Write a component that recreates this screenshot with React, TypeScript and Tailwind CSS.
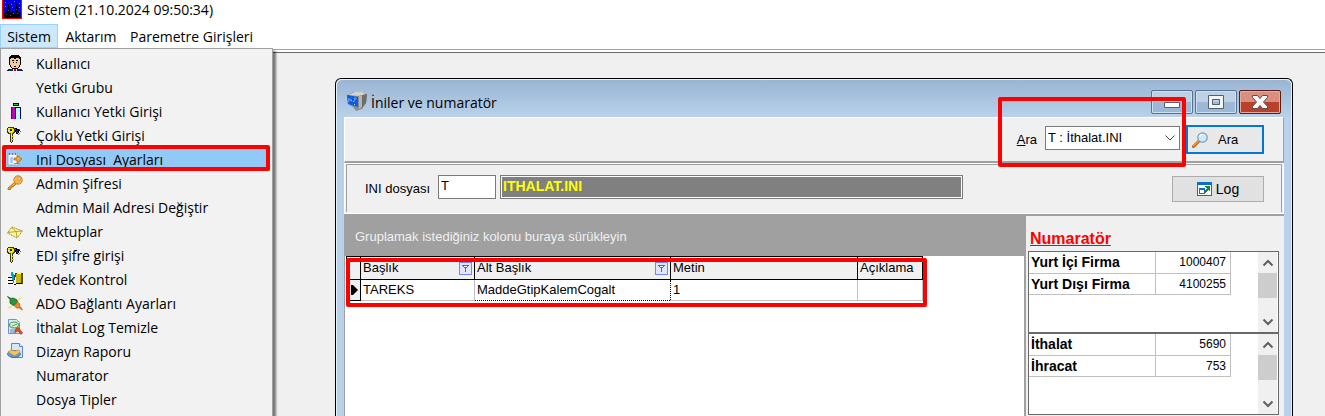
import { ReactNode } from "react";
import clsx from "clsx";

type MenuEntry = {
  label: string;
  icon?: ReactNode;
  active?: boolean;
};

type Counter = {
  name: string;
  value: string;
};

function Icon16({ children }: { children: ReactNode }) {
  return (
    <svg viewBox="0 0 16 16" className="size-4" shapeRendering="crispEdges" aria-hidden="true">
      {children}
    </svg>
  );
}

const userIcon = (
  <Icon16>
    <path d="M3 2h10v9h-1v2h-1v1H5v-1H4v-2H3z" fill="#f6c9a0" />
    <path d="M4 0h8v1h1v1h1v5h-1V4h-1V3H9v1H7V3H4v1H3v3H2V2h1V1h1z" fill="#000" />
    <path d="M2 7h1v3H2zM13 7h1v3h-1zM3 10h1v2H3zM12 10h1v2h-1zM4 12h1v1H4zM11 12h1v1h-1zM5 13h6v1H5zM5 5h2v1H5zM9 5h2v1H9zM6 7h1v1H6zM9 7h1v1H9zM7 11h2v1H7z" fill="#000" />
    <path d="M1 14h5v2H0v-1h1zM10 14h5v1h1v1h-6z" fill="#1c2450" />
    <path d="M6 14h4v1H6z" fill="#fff" />
    <path d="M7 14h2v2H7z" fill="#e00000" />
  </Icon16>
);

const accessIcon = (
  <Icon16>
    <path d="M6 0h6v3H6z" fill="#000" />
    <path d="M7 1h4v1H7z" fill="#00e000" />
    <path d="M4 4h5v12H4z" fill="#c000c0" />
    <path d="M4 4h1v12H4z" fill="#600070" />
    <path d="M9 4h5v12H9z" fill="#a8ffff" />
    <path d="M8 4h1v12H8zM13 4h1v12h-1zM9 4h5v1H9z" fill="#000080" />
    <path d="M10 6h1v2h-1zM11 9h1v2h-1zM10 12h1v3h-1z" fill="#fff" />
  </Icon16>
);

const keysIcon = (
  <Icon16>
    <path d="M1 0h6v1h1v5H7v1H6v8H5v1H4v-1H3V7H1V6H0V1h1z" fill="#3a3800" />
    <path d="M1 1h5v1h1v3H6v1H5v9H4V6H2V5H1z" fill="#f0e800" />
    <path d="M3 2h2v2H3z" fill="#222" />
    <path d="M2 1h1v1H2zM1 3h1v1H1zM4 8h1v1H4z" fill="#fff" />
    <path d="M5 9h2v1H5zM5 12h2v1H5z" fill="#e0d000" />
    <path d="M8 1h2v1h2v1h1v1h-1v2h-1v1H9V5H8z" fill="#000" />
    <path d="M9 3h2v2H9z" fill="#0018d0" />
    <path d="M8 2h1v1H8zM10 5h1v1h-1z" fill="#008070" />
    <path d="M12 2h1v1h-1zM13 4h1v1h-1zM12 6h1v1h-1zM11 7h1v1h-1z" fill="#666" />
  </Icon16>
);

const iniIcon = (
  <svg viewBox="0 0 16 16" className="size-4" aria-hidden="true">
    <path d="M1 3h11v11H1z" fill="#f8fbff" stroke="#8fa8c8" />
    <path d="M2 2h1v2H2zM5 2h1v2H5zM8 2h1v2H8z" fill="#5878a8" />
    <path d="M3 6h3v6H3z" fill="#a8c8ff" />
    <path d="M7 12h5v1H7z" fill="#6a90c8" />
    <path d="M7 7h3V4l5 4-5 4V9H7z" fill="#eca63a" stroke="#a8681a" strokeWidth="0.8" />
  </svg>
);

const goldKeyIcon = (
  <svg viewBox="0 0 16 16" className="size-4" aria-hidden="true">
    <path d="m8 7-7 6v1.500h2.500V13H5v-1.500h1.500l3-3z" fill="#f3a91e" stroke="#a96210" strokeWidth="0.8" />
    <circle cx="11" cy="5" r="4.2" fill="#f8b944" stroke="#b06c14" strokeWidth="0.8" />
    <circle cx="12.200" cy="3.800" r="1.3" fill="#fff6d8" stroke="#a86a1a" strokeWidth="0.6" />
  </svg>
);

const mailIcon = (
  <svg viewBox="0 0 16 16" className="size-4" aria-hidden="true">
    <path d="m5 4 10.500 4-5.500 7-9.500-5z" fill="#fff5a0" stroke="#6c5c00" strokeDasharray="1 1" />
    <path d="m1 9.500 8-1 6-.5M9 8.500l1 5.500M5 4.500l4 4" fill="none" stroke="#b09000" strokeWidth="0.8" />
  </svg>
);

const backupIcon = (
  <Icon16>
    <path d="M0 5h7v9H0z" fill="#fff" />
    <path d="M1 6h4v1H1zM1 9h5v1H1zM1 12h5v1H1zM7 13h2v1H7z" fill="#000" />
    <path d="M9 2h7v11H9z" fill="#c8b800" />
    <path d="M10 1h5v2h-5z" fill="#fff480" />
    <path d="M14 2h2v11h-2z" fill="#5c5400" />
    <path d="M9 12h6v1H9z" fill="#000" />
    <path d="M4 1h2v2h1v3h1v3H7v3H6V9H5V5H4z" fill="#00a8b8" />
    <path d="M8 2h2v1H9v3H8v3H7V4h1z" fill="#0050a0" />
  </Icon16>
);

const plugIcon = (
  <svg viewBox="0 0 16 16" className="size-4" aria-hidden="true">
    <path d="m14 3-4 3M2 13l4-3M1 11.500l2 2M12 13l3 0" stroke="#f4d800" />
    <path d="m.5 1.500 2.500 3V8l2 1.500 2 1 3.500-4-1-2L6 3 4 3.500z" fill="#259b38" stroke="#145c20" strokeWidth="0.8" />
    <path d="m10.500 7 2 1.500.5 3 2.500 3.500-3-2H9.500L7.500 11z" fill="#f58a24" stroke="#b85a10" strokeWidth="0.8" />
  </svg>
);

const logCleanIcon = (
  <svg viewBox="0 0 16 16" className="size-4" aria-hidden="true">
    <path d="M1.500.500h8l3 3v11h-11z" fill="#dbe9fb" stroke="#6f94c8" />
    <path d="M3 11h6M3 13h6" stroke="#5b84c4" />
    <path d="m9 9 2.500-.5 4 5.500-1.500 1.500-3-3.500-3 1.500z" fill="#e04e28" stroke="#a02c12" strokeWidth="0.6" />
    <ellipse cx="7" cy="6" rx="4.500" ry="3" fill="#d6f0d0" stroke="#45a050" strokeWidth="1.200" />
    <path d="m5 7 5-2" stroke="#55a860" />
  </svg>
);

const reportIcon = (
  <svg viewBox="0 0 16 16" className="size-4" aria-hidden="true">
    <path d="M4.500.500h8l3 3v11h-11z" fill="#d6e6fc" stroke="#5f86c4" />
    <path d="M12.500.500v3h3" fill="#fff" stroke="#5f86c4" />
    <ellipse cx="7" cy="11" rx="6.500" ry="3.500" fill="#5b9be8" stroke="#2f66b8" strokeWidth="0.8" />
    <path d="m1 9 3-2 4 1 4-1 1 2-5 4z" fill="#f9c552" stroke="#c08a1c" strokeWidth="0.6" />
  </svg>
);

const menuEntries: MenuEntry[] = [
  { label: "Kullanıcı", icon: userIcon },
  { label: "Yetki Grubu" },
  { label: "Kullanıcı Yetki Girişi", icon: accessIcon },
  { label: "Çoklu Yetki Girişi", icon: keysIcon },
  { label: "Ini Dosyası  Ayarları", icon: iniIcon, active: true },
  { label: "Admin Şifresi", icon: goldKeyIcon },
  { label: "Admin Mail Adresi Değiştir" },
  { label: "Mektuplar", icon: mailIcon },
  { label: "EDI şifre girişi", icon: keysIcon },
  { label: "Yedek Kontrol", icon: backupIcon },
  { label: "ADO Bağlantı Ayarları", icon: plugIcon },
  { label: "İthalat Log Temizle", icon: logCleanIcon },
  { label: "Dizayn Raporu", icon: reportIcon },
  { label: "Numarator" },
  { label: "Dosya Tipler" },
];

const firmCounters: Counter[] = [
  { name: "Yurt İçi Firma", value: "1000407" },
  { name: "Yurt Dışı Firma", value: "4100255" },
];

const fileCounters: Counter[] = [
  { name: "İthalat", value: "5690" },
  { name: "İhracat", value: "753" },
];

function AppLogo() {
  return (
    <svg viewBox="0 0 20 19" className="h-[19px] w-5" shapeRendering="crispEdges" aria-hidden="true">
      <path d="M0 0h20v19H0z" fill="#f00" />
      <path d="M1 0h18v18H1z" fill="#0000e0" />
      <path d="M2 13h2v-2h1V8h1V4h1v4h1v4h2v-1h2v2h1V7h1V4h1v3h1v5h2v6H2z" fill="#000" />
      <path d="M3 2h1v1H3zM9 4h1v1H9zM12 1h1v1h-1zM17 3h1v1h-1zM10 7h1v1h-1zM3 6h1v1H3zM17 7h1v1h-1z" fill="#6080ff" />
      <path d="M6 10h1v1H6zM14 9h1v1h-1zM11 13h1v1h-1zM4 14h1v1H4zM15 13h1v1h-1zM8 15h1v1H8z" fill="#555" />
    </svg>
  );
}

function SystemMenu() {
  return (
    <ul role="menu" className="absolute top-full left-0 z-20 h-screen w-[273px] border border-[#a0a0a0] bg-[#f2f2f2] pt-0.5 shadow-[3px_3px_2px_rgba(0,0,0,0.5)]">
      {menuEntries.map((entry) => (
        <li key={entry.label} role="none" className="relative px-0.5">
          <button
            type="button"
            role="menuitem"
            className={clsx("flex h-6 w-full items-center pl-1 text-left whitespace-pre", entry.active && "bg-[#91c9f7]")}
          >
            <span className="w-[29px] shrink-0">{entry.icon}</span>
            <span className="pt-0.5">{entry.label}</span>
          </button>
          {entry.active && <span className="pointer-events-none absolute -top-0.5 right-0.5 bottom-0 left-px rounded-xs border-4 border-[#fe0000]" />}
        </li>
      ))}
    </ul>
  );
}

function WindowButtons() {
  const base = "flex h-6 w-[42px] items-center justify-center rounded-xs border";
  return (
    <div className="flex gap-0.5">
      <button type="button" aria-label="Simge durumuna küçült" className={clsx(base, "border-[#56728f] bg-linear-to-b from-[#bdd0e5] from-50% to-[#9db8d4] to-50% inset-ring inset-ring-[#cfe0f0]")}>
        <svg viewBox="0 0 18 18" className="size-[18px]" aria-hidden="true">
          <path d="M1.500 9.500h15v5h-15z" fill="#fff" stroke="#53606f" />
        </svg>
      </button>
      <button type="button" aria-label="Ekranı kapla" className={clsx(base, "border-[#56728f] bg-linear-to-b from-[#bdd0e5] from-50% to-[#9db8d4] to-50% inset-ring inset-ring-[#cfe0f0]")}>
        <svg viewBox="0 0 18 18" className="size-[18px]" aria-hidden="true">
          <path d="M1.500 2.500h15v13h-15zM5.500 6.500h7v5h-7z" fill="#f4f4f4" fillRule="evenodd" stroke="#53606f" />
        </svg>
      </button>
      <button type="button" aria-label="Kapat" className={clsx(base, "border-[#5a1c18] bg-linear-to-b from-[#d98f80] from-50% to-[#b9412b] to-50% inset-ring inset-ring-[#e6ab9e]")}>
        <svg viewBox="0 0 18 18" className="size-[18px]" aria-hidden="true">
          <path d="M1.500 2.500h5L9 5.500l2.500-3h5v2L12.500 9l4 4.500v2h-5L9 12.500l-2.500 3h-5v-2L5.500 9l-4-4.500z" fill="#f6f6f6" stroke="#53505a" strokeLinejoin="round" />
        </svg>
      </button>
    </div>
  );
}

function ComputerIcon() {
  return (
    <svg viewBox="0 0 20 19" className="h-[19px] w-5" aria-hidden="true">
      <path d="m0 3 7-3 8 0 5 2-1 9-4 6-6 2-3-4-5-3z" fill="#8c8c8c" />
      <path d="m1 3 7-3h7l4 2-7 2z" fill="#d4d4d4" />
      <path d="m12 4 8-2-1 9-5 6z" fill="#6c6c6c" />
      <path d="m12 4 3-1v12l-3 2z" fill="#b4b4b4" />
      <path d="m0 3 11 2v10L1 12z" fill="#1858d8" />
      <path d="m1 6 4 1-4 4zM7 5l3 1-3 4z" fill="#3c98f4" />
      <path d="M4 8h1v1H4zM6 9h1v1H6zM7 12h1v1H7z" fill="#5ff0ff" />
      <path d="M9 15h1v1H9z" fill="#20e020" />
    </svg>
  );
}

function SearchIcon() {
  return (
    <svg viewBox="0 0 16 16" className="size-4" aria-hidden="true">
      <path d="m1.500 14.500 5-5" stroke="#b85c10" strokeWidth="3" strokeLinecap="round" />
      <path d="m1.500 14 5-5" stroke="#f99a30" strokeWidth="1.500" strokeLinecap="round" />
      <circle cx="10.500" cy="5.500" r="4.700" fill="#cdeafc" stroke="#7e96c4" strokeWidth="1.200" />
      <path d="M7.500 5a3 3 0 0 1 3-2.500" fill="none" stroke="#fff" strokeWidth="1.200" />
    </svg>
  );
}

function LogIcon() {
  return (
    <svg viewBox="0 0 15 14" className="h-3.5 w-[15px]" shapeRendering="crispEdges" aria-hidden="true">
      <path d="M0 0h15v14H0z" fill="#0a70c8" />
      <path d="M1 3h13v10H1z" fill="#fff" />
      <path d="M2 6h6v6H2z" fill="#0a70c8" />
      <path d="M3 8h4v3H3z" fill="#fff" />
      <path d="M8 4h5v5h-1V8h-1v1h-1v1H9v1H7V9h1V8h1V7h1V6H9V5H8z" fill="#109020" />
    </svg>
  );
}

function FilterButton({ column }: { column: string }) {
  return (
    <button type="button" aria-label={`${column} filtresi`} className="flex size-[13px] items-center justify-center border border-[#7088f0] bg-[#e0e6ff]">
      <svg viewBox="0 0 9 9" className="size-[9px]" shapeRendering="crispEdges" aria-hidden="true">
        <path d="M1 1h7v1H7v1H6v1H5v4H4V4H3V3H2V2H1z" fill="#4860d8" />
        <path d="M3 2h3v1H3z" fill="#fff" />
      </svg>
    </button>
  );
}

function Chevron({ className }: { className?: string }) {
  return (
    <svg viewBox="0 0 12 8" className={clsx("h-2 w-3", className)} fill="none" stroke="currentColor" aria-hidden="true">
      <path d="m1.500 1.500 4.500 4.500 4.500-4.500" />
    </svg>
  );
}

function CounterBox({ label, counters }: { label: string; counters: Counter[] }) {
  return (
    <div className="flex h-[82px] justify-between border border-[#696969] bg-white">
      <table aria-label={label} className="h-[42px] w-[202px] table-fixed border-collapse">
        <tbody>
          {counters.map((c) => (
            <tr key={c.name} className="h-[21px]">
              <th scope="row" className="w-[126px] border-r border-b border-[#c0c0c0] pl-0.5 text-left text-sm leading-4 font-bold">
                {c.name}
              </th>
              <td className="border-r border-b border-[#c0c0c0] pr-1 text-right text-xs leading-4">{c.value}</td>
            </tr>
          ))}
        </tbody>
      </table>
      <div className="mr-px flex w-[19px] flex-col items-center bg-[#f0f0f0] text-[#606060]">
        <button type="button" aria-label="Yukarı" className="flex h-[21px] items-center">
          <Chevron className="rotate-180 stroke-2" />
        </button>
        <span className="h-[25px] w-full bg-[#cdcdcd]" />
        <button type="button" aria-label="Aşağı" className="mt-auto flex h-[21px] items-center">
          <Chevron className="stroke-2" />
        </button>
      </div>
    </div>
  );
}

function IniTable() {
  const head = "border border-black bg-[#f0f0f0] px-0.5 text-left font-normal";
  return (
    <div className="relative ml-px w-[577px]">
      <table className="w-[576px] table-fixed border-collapse">
        <colgroup>
          <col className="w-[14px]" />
          <col className="w-[114px]" />
          <col className="w-[196px]" />
          <col className="w-[187px]" />
          <col className="w-[65px]" />
        </colgroup>
        <thead>
          <tr className="h-[23px]">
            <th className={head} aria-label="Seçim" />
            <th className={head}>
              <div className="flex items-center justify-between">
                Başlık
                <FilterButton column="Başlık" />
              </div>
            </th>
            <th className={head}>
              <div className="flex items-center justify-between">
                Alt Başlık
                <FilterButton column="Alt Başlık" />
              </div>
            </th>
            <th className={head}>Metin</th>
            <th className={head}>Açıklama</th>
          </tr>
        </thead>
        <tbody>
          <tr className="h-[21px]">
            <td className="border border-black bg-[#f0f0f0] p-0">
              <svg viewBox="0 0 8 10" className="ml-1 h-2.5 w-2" aria-hidden="true">
                <path d="M0 0h2l5 5-5 5H0z" />
              </svg>
            </td>
            <td className="border-r border-b border-[#c0c0c0] px-0.5">TAREKS</td>
            <td className="border border-dotted border-black px-0.5">MaddeGtipKalemCogalt</td>
            <td className="border-r border-b border-[#c0c0c0] px-0.5">1</td>
            <td className="border-r border-b border-[#c0c0c0] px-0.5" />
          </tr>
        </tbody>
      </table>
      <span className="pointer-events-none absolute -right-1 -bottom-1.5 left-0 top-0.5 rounded-xs border-4 border-[#fe0000]" />
    </div>
  );
}

function IniWindow() {
  return (
    <section className="flex flex-1 flex-col rounded-t-md border border-b-0 border-black bg-[#b9d1ea] px-2 font-['Liberation_Sans',sans-serif] text-[13px] leading-4 inset-ring inset-ring-[#e4f2fc]">
      <header className="-mx-[7px] mt-px flex h-[37px] shrink-0 items-center rounded-t-md bg-linear-to-b from-[#9ab5d3] to-[#b9d1ea] px-2.5 pt-1.5">
        <ComputerIcon />
        <h1 className="ml-1 grow pt-0.5 font-['Open_Sans',sans-serif] text-sm">İniler ve numaratör</h1>
        <WindowButtons />
      </header>

      <div className="flex min-h-0 grow flex-col bg-[#f0f0f0]">
        <form className="relative flex h-[46px] shrink-0 items-center justify-end border-t border-r border-b-2 border-l border-t-white border-r-[#a0a0a0] border-b-[#a0a0a0] border-l-white pr-[19px]">
          <label htmlFor="ini-search" className="mr-2">
            <u>A</u>ra
          </label>
          <div className="relative mr-1.5 mb-1">
            <select id="ini-search" className="h-6 w-[135px] appearance-none border border-[#7a7a7a] bg-white pl-0.5">
              <option>T : İthalat.INI</option>
            </select>
            <Chevron className="pointer-events-none absolute top-2 right-1 text-[#404040]" />
          </div>
          <button type="submit" className="flex h-[29px] w-[78px] items-center border-2 border-[#0078d7] bg-[#e8e8e8] pl-1">
            <SearchIcon />
            <span className="ml-2.5">Ara</span>
          </button>
          <span className="pointer-events-none absolute -top-[21px] right-[97px] -bottom-1.5 w-[188px] rounded-xs border-4 border-[#fe0000]" />
        </form>

        <div className="h-[51px] shrink-0 border border-white p-px pt-0">
          <div className="flex h-full items-center border border-b-0 border-[#a0a0a0] pr-[17px] pl-[18px]">
            <label htmlFor="ini-code" className="w-[73px]">
              INI dosyası
            </label>
            <input id="ini-code" defaultValue="T" className="-mt-1 h-6 w-[58px] border border-[#7a7a7a] bg-white px-0.5 pb-0.5 text-[13px]" />
            <input
              aria-label="INI dosya adı"
              defaultValue="ITHALAT.INI"
              readOnly
              className="-mt-1 ml-1 h-6 w-[463px] border border-[#7a7a7a] bg-[#808080] px-0.5 pb-0.5 text-sm font-bold text-[#ff0] inset-ring inset-ring-white"
            />
            <button type="button" className="ml-auto flex h-[26px] w-[92px] items-center justify-center gap-1 border border-[#adadad] bg-[#e1e1e1]">
              <LogIcon />
              <span className="text-sm">Log</span>
            </button>
          </div>
        </div>

        <div className="flex min-h-0 grow">
          <div className="grow border-r-2 border-l border-[#a0a0a0] bg-white">
            <p className="flex h-[42px] items-center bg-[#a0a0a0] pt-1 pl-2.5 text-[#f0f0f0]">Gruplamak istediğiniz kolonu buraya sürükleyin</p>
            <IniTable />
          </div>
          <aside className="w-[258px] shrink-0 border-t-2 border-[#a0a0a0] pr-[5px] pl-0.5">
            <h2 className="flex h-[35px] items-end pl-0.5 text-base font-bold text-[#f00] underline">Numaratör</h2>
            <CounterBox label="Firma numaratörleri" counters={firmCounters} />
            <CounterBox label="Dosya numaratörleri" counters={fileCounters} />
            <div className="mt-px h-5 border border-[#696969] bg-white" />
          </aside>
        </div>
      </div>
    </section>
  );
}

export default function App() {
  return (
    <div className="flex h-screen flex-col overflow-hidden bg-[#f0f0f0] font-['Open_Sans',sans-serif] text-sm text-black">
      <header className="flex h-6 shrink-0 items-start gap-[5px] bg-white pl-0.5">
        <AppLogo />
        <span>Sistem (21.10.2024 09:50:34)</span>
      </header>

      <nav className="relative flex h-6 shrink-0 items-center bg-white">
        <button type="button" className="h-6 w-[58px] border border-[#99d1ff] bg-[#cce8ff] pt-0.5">
          Sistem
        </button>
        <button type="button" className="w-[66px] pt-0.5">
          Aktarım
        </button>
        <button type="button" className="px-1.5 pt-0.5">
          Paremetre Girişleri
        </button>
        <SystemMenu />
      </nav>

      <main className="flex min-h-0 grow border-t border-white">
        <div className="flex grow flex-col border-t border-[#a0a0a0]">
          <div className="h-[3px] shrink-0 border-b border-[#696969] bg-white" />
          <div className="flex grow flex-col pt-[25px] pr-8 pl-[335px]">
            <IniWindow />
          </div>
        </div>
      </main>
    </div>
  );
}
